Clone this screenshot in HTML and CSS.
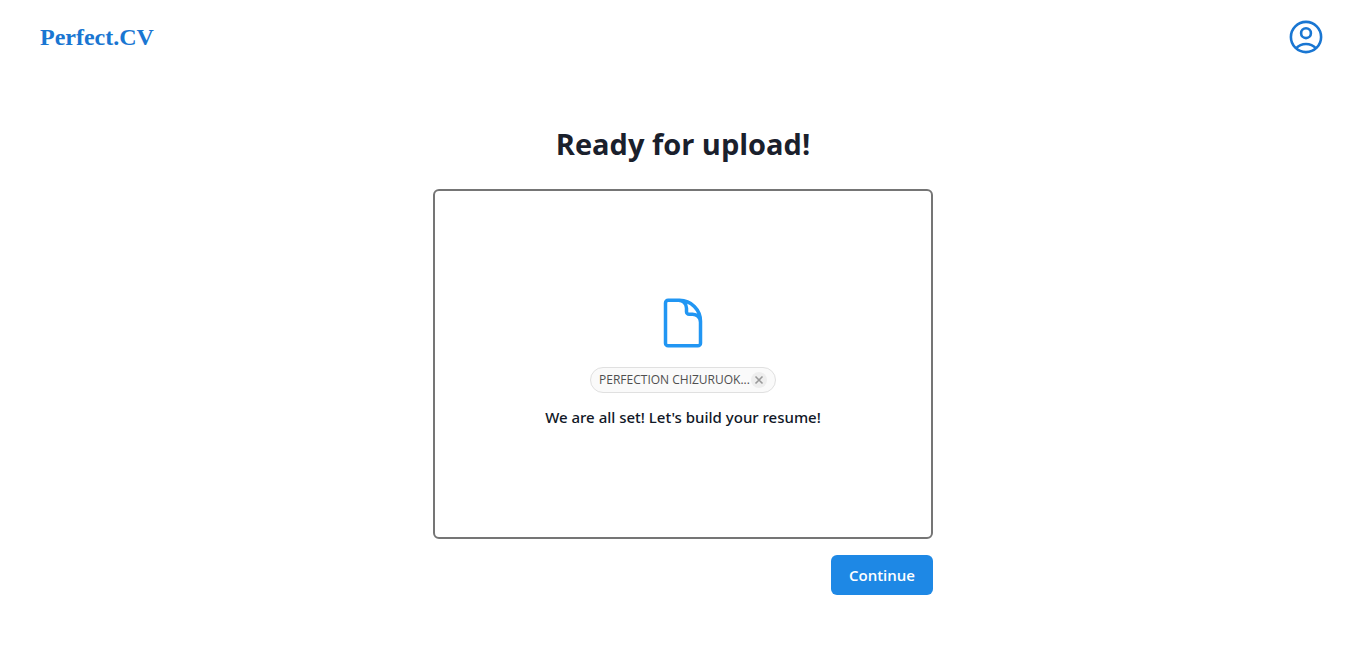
FILE: index.html
```html
<!DOCTYPE html>
<html lang="en">
<head>
<meta charset="utf-8">
<meta name="viewport" content="width=device-width, initial-scale=1">
<title>Perfect.CV</title>
<link rel="stylesheet" href="styles.css">
</head>
<body>
<header class="topbar">
  <a class="brand" href="#">Perfect.CV</a>
  <button class="account" type="button" aria-label="Account">
    <svg viewBox="0 0 34 34" fill="none" stroke="currentColor" stroke-width="2.6">
      <circle cx="17" cy="17" r="15.1"/>
      <circle cx="17" cy="13.2" r="4.9"/>
      <path d="M7 28.4Q11 24 17 24T27 28.4"/>
    </svg>
  </button>
</header>
<main class="upload">
  <h1 class="title">Ready for upload!</h1>
  <section class="dropzone">
    <svg class="file-icon" viewBox="0 0 24 24" fill="none" stroke="currentColor" stroke-width="1.5" stroke-linecap="round" stroke-linejoin="round" aria-hidden="true">
      <path d="M19.5 14.25v-2.625a3.375 3.375 0 0 0-3.375-3.375h-1.5A1.125 1.125 0 0 1 13.5 7.125v-1.5a3.375 3.375 0 0 0-3.375-3.375H8.25m2.25 0H5.625c-.621 0-1.125.504-1.125 1.125v17.25c0 .621.504 1.125 1.125 1.125h12.75c.621 0 1.125-.504 1.125-1.125V11.25a9 9 0 0 0-9-9z"/>
    </svg>
    <div class="chip">
      <span class="chip-name">PERFECTION CHIZURUOK...</span>
      <button class="chip-remove" type="button" aria-label="Remove file">
        <svg viewBox="0 0 16 16" fill="none" stroke="currentColor" stroke-width="1.6"><path d="M4.5 4.5l7 7M11.5 4.5l-7 7"/></svg>
      </button>
    </div>
    <p class="message">We are all set! Let's build your resume!</p>
  </section>
  <button class="continue" type="button">Continue</button>
</main>
</body>
</html>
```
FILE: styles.css
```css
* {
  box-sizing: border-box;
}

body {
  margin: 0;
  background: #fff;
  color: #1a202c;
  font-family: "Open Sans", "Noto Sans", sans-serif;
}

button {
  border: 0;
  padding: 0;
  font: inherit;
  cursor: pointer;
}

svg {
  display: block;
}

.topbar {
  display: flex;
  align-items: center;
  justify-content: space-between;
  padding: 20px 39px 20px 40px;
}

.brand {
  color: #1976d2;
  font: bold 24px/32px "Liberation Serif", serif;
  text-decoration: none;
}

.account {
  width: 34px;
  height: 34px;
  background: none;
  color: #1976d2;
}

.upload {
  display: flex;
  flex-direction: column;
  max-width: 536px;
  margin: 0 auto;
  padding: 50px 16px 16px 20px;
}

.title {
  margin: 0 0 25px;
  font-size: 29px;
  font-weight: 700;
  line-height: 40px;
  text-align: center;
}

.dropzone {
  display: flex;
  flex-direction: column;
  align-items: center;
  justify-content: center;
  min-height: 350px;
  padding-bottom: 4px;
  border: 2px solid #757575;
  border-radius: 6px;
}

.file-icon {
  width: 56px;
  height: 56px;
  color: #2196f3;
}

.chip {
  display: flex;
  align-items: center;
  gap: 1px;
  height: 26px;
  margin-top: 16px;
  padding: 0 8px;
  border: 1px solid #e0e0e0;
  border-radius: 13px;
  background: #fafafa;
}

.chip-name {
  color: #4f4f4f;
  font-size: 12px;
  line-height: 24px;
}

.chip-remove {
  width: 16px;
  height: 16px;
  border-radius: 50%;
  background: #eee;
  color: #999;
}

.message {
  margin: 12px 0 0;
  color: #111827;
  font-family: "Noto Sans", "Open Sans", sans-serif;
  font-size: 15px;
  font-weight: 500;
  line-height: 24px;
}

.continue {
  align-self: flex-end;
  height: 40px;
  margin-top: 16px;
  padding: 0 18px;
  border-radius: 6px;
  background: #1e88e5;
  color: #fff;
  font-size: 15px;
  font-weight: 600;
}
```
